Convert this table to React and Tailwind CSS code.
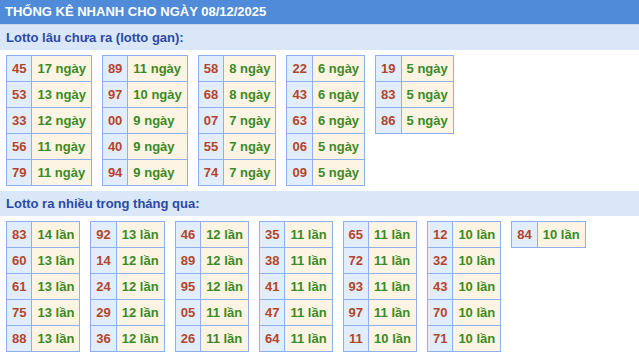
import React from "react";

const gan = [
  [["45", "17 ngày"], ["53", "13 ngày"], ["33", "12 ngày"], ["56", "11 ngày"], ["79", "11 ngày"]],
  [["89", "11 ngày"], ["97", "10 ngày"], ["00", "9 ngày"], ["40", "9 ngày"], ["94", "9 ngày"]],
  [["58", "8 ngày"], ["68", "8 ngày"], ["07", "7 ngày"], ["55", "7 ngày"], ["74", "7 ngày"]],
  [["22", "6 ngày"], ["43", "6 ngày"], ["63", "6 ngày"], ["06", "5 ngày"], ["09", "5 ngày"]],
  [["19", "5 ngày"], ["83", "5 ngày"], ["86", "5 ngày"]],
];

const nhieu = [
  [["83", "14 lần"], ["60", "13 lần"], ["61", "13 lần"], ["75", "13 lần"], ["88", "13 lần"]],
  [["92", "13 lần"], ["14", "12 lần"], ["24", "12 lần"], ["29", "12 lần"], ["36", "12 lần"]],
  [["46", "12 lần"], ["89", "12 lần"], ["95", "12 lần"], ["05", "11 lần"], ["26", "11 lần"]],
  [["35", "11 lần"], ["38", "11 lần"], ["41", "11 lần"], ["47", "11 lần"], ["64", "11 lần"]],
  [["65", "11 lần"], ["72", "11 lần"], ["93", "11 lần"], ["97", "11 lần"], ["11", "10 lần"]],
  [["12", "10 lần"], ["32", "10 lần"], ["43", "10 lần"], ["70", "10 lần"], ["71", "10 lần"]],
  [["84", "10 lần"]],
];

function Tbl({ rows }) {
  return (
    <div className="grid grid-cols-[auto_auto] border-l border-t border-[#8eaff0]">
      {rows.map(([n, v], i) => (
        <React.Fragment key={i}>
          <div className="h-[26px] border-r border-b border-[#8eaff0] bg-[#e2edfb] px-[5px] flex items-center justify-center text-[#b3452c]">
            {n}
          </div>
          <div className="h-[26px] border-r border-b border-[#8eaff0] bg-[#fdf4e3] px-[5px] flex items-center text-[#3b8a26]">
            {v}
          </div>
        </React.Fragment>
      ))}
    </div>
  );
}

function Bar({ children }) {
  return (
    <div className="h-[25px] bg-[#dae7f9] flex items-center pl-[6px] text-[#2a4aa5] text-[13px] font-bold">
      {children}
    </div>
  );
}

export default function App() {
  return (
    <div
      className="w-[639px] h-[355px] bg-white overflow-hidden"
      style={{ fontFamily: '"Liberation Sans", Arial, sans-serif' }}
    >
      <div className="h-[24px] bg-[#508bd9] flex items-center pl-[5px] text-white text-[13px] font-bold">
        THỐNG KÊ NHANH CHO NGÀY 08/12/2025
      </div>
      <div className="h-[1px] bg-[#c6d5ea]" />
      <Bar>Lotto lâu chưa ra (lotto gan):</Bar>
      <div className="flex items-start gap-x-[10px] pl-[6px] py-[5px] text-[13px] font-bold">
        {gan.map((r, i) => (
          <Tbl key={i} rows={r} />
        ))}
      </div>
      <Bar>Lotto ra nhiều trong tháng qua:</Bar>
      <div className="flex items-start gap-x-[10px] pl-[6px] pt-[5px] text-[13px] font-bold">
        {nhieu.map((r, i) => (
          <Tbl key={i} rows={r} />
        ))}
      </div>
    </div>
  );
}
